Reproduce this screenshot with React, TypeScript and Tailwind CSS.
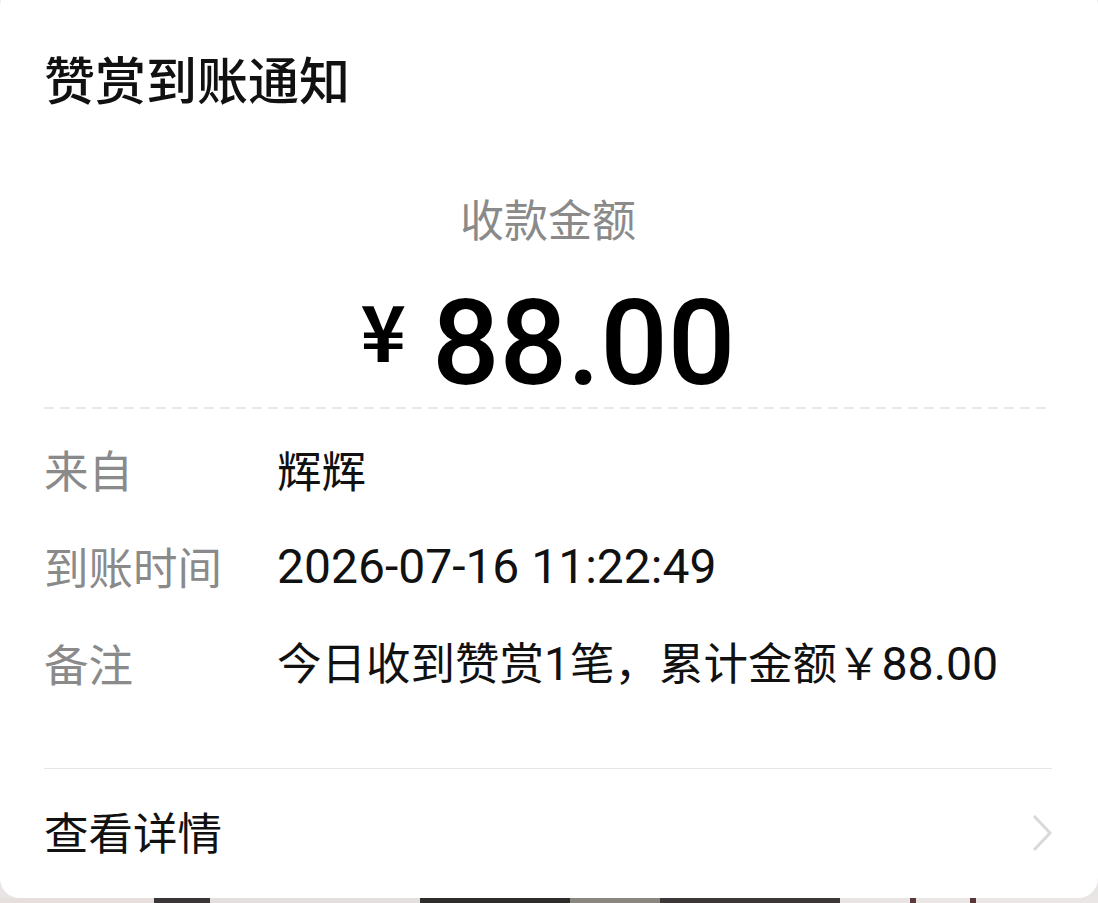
import React from "react";

const CJK = "font-['Noto_Sans_CJK_SC','Noto_Sans',sans-serif]";
const LAT = "font-['Roboto','Noto_Sans_CJK_SC',sans-serif]";

function Row({ label, children }: { label: string; children: React.ReactNode }) {
  return (
    <div className="flex h-[97px] items-center pb-[7px]">
      <div className="w-[233px] shrink-0 text-[44.5px] leading-none text-[#8a8a8a]">{label}</div>
      <div className="text-[44.5px] leading-none text-[#111111] whitespace-nowrap">{children}</div>
    </div>
  );
}

export default function App() {
  return (
    <div className={`flex h-[903px] w-[1098px] flex-col overflow-hidden bg-[#e9e5e5] ${CJK}`}>
      <div className="-mt-[14px] flex h-[912px] shrink-0 flex-col rounded-[20px] bg-white pl-[44px] pr-[46px] pt-[14px]">
        <div className="flex h-[164px] items-center pb-[7px] text-[51px] font-medium leading-none text-[#111111]">赞赏到账通知</div>
        <div className="flex h-[108px] items-center justify-center text-[44px] leading-none text-[#8a8a8a]">收款金额</div>
        <div className="flex h-[135px] items-center justify-center pt-[8px] text-black">
          <span className="whitespace-nowrap leading-none">
            <span className="mr-[26px] align-[22px] text-[77px] font-bold">¥</span>
            <span className={`${LAT} text-[119px] font-medium`}>88.00</span>
          </span>
        </div>
        <div className="h-[2px] bg-[linear-gradient(to_right,#e8e8e8_10px,transparent_10px)] bg-[length:16px_2px]" />
        <div className="flex flex-col pt-[15px]">
          <Row label="来自">辉辉</Row>
          <Row label="到账时间">
            <span className={`${LAT} text-[48px]`}>2026-07-16 11:22:49</span>
          </Row>
          <Row label="备注">
            今日收到赞赏<span className={`${LAT} text-[46px]`}>1</span>笔，累计金额￥<span className={`${LAT} text-[46.5px]`}>88.00</span>
          </Row>
        </div>
        <div className="h-[53px]" />
        <div className="h-[1px] bg-[#e6e6e6]" />
        <div className="flex h-[128px] items-center justify-between pb-[3px]">
          <span className="text-[44.5px] leading-none text-[#111111]">查看详情</span>
          <svg width="22" height="38" viewBox="0 0 22 38" className="mr-[-1px] mt-[3px]">
            <path d="M3 2 L19 19 L3 36" fill="none" stroke="#d9d9d9" strokeWidth="3" />
          </svg>
        </div>
      </div>
      <div className="flex h-[5px] shrink-0">
        <div className="w-[154px] bg-[#e7dede]" />
        <div className="w-[56px] bg-[#3a3536]" />
        <div className="w-[210px] bg-[#e4dede]" />
        <div className="w-[150px] bg-[#2f2c2c]" />
        <div className="w-[90px] bg-[#8a8780]" />
        <div className="w-[180px] bg-[#3b3837]" />
        <div className="w-[70px] bg-[#e9e4e4]" />
        <div className="w-[6px] bg-[#5a3a3a]" />
        <div className="w-[54px] bg-[#ebe6e6]" />
        <div className="w-[6px] bg-[#5a3535]" />
        <div className="flex-1 bg-[#ebe6e6]" />
      </div>
    </div>
  );
}
